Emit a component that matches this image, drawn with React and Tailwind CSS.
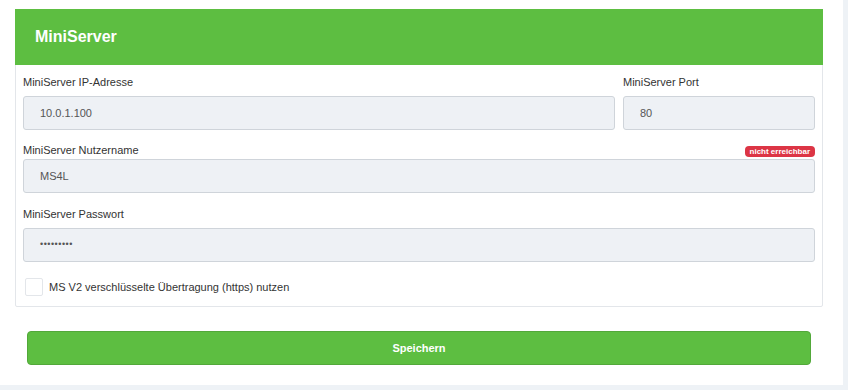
import React from 'react';

function Field({ label, value, badge, className = '' }) {
  return (
    <div className={`flex flex-col ${className}`}>
      <div className="flex items-end justify-between">
        <span className={`text-[11px] leading-none text-[#333] ${badge ? 'pb-[3px]' : 'pb-[8px]'}`}>{label}</span>
        {badge && (
          <span className="bg-[#dc3545] text-white text-[8px] font-bold leading-[11px] h-[11px] px-[5px] rounded-[4px] mb-[2px]">
            {badge}
          </span>
        )}
      </div>
      <div className="h-[34px] bg-[#eef1f5] border border-[#cfd4da] rounded-[3px] flex items-center px-4 text-[11px] text-[#555]">
        {value}
      </div>
    </div>
  );
}

export default function App() {
  return (
    <div className="w-[848px] h-[390px] bg-[#eef2f6] font-['Liberation_Sans',Arial,sans-serif]">
      <div className="w-[843px] h-[385px] bg-white pt-[9px] pl-[15px] pr-[20px]">
        <div className="border border-[#e3e6ea] rounded-[2px] h-[298px]">
          <div className="bg-[#5dbe41] h-[56px] mx-[-1px] mt-[-1px] flex items-center pl-[20px]">
            <h1 className="text-white text-[16px] font-bold">MiniServer</h1>
          </div>
          <div className="px-[7px] pt-[12px]">
            <div className="flex gap-[8px]">
              <Field label="MiniServer IP-Adresse" value="10.0.1.100" className="flex-1" />
              <Field label="MiniServer Port" value="80" className="w-[192px]" />
            </div>
            <Field className="mt-[15px]" label="MiniServer Nutzername" value="MS4L" badge="nicht erreichbar" />
            <Field className="mt-[16px]" label="MiniServer Passwort" value={<span className="text-[9px] tracking-[0.5px]">•••••••••</span>} />
            <label className="flex items-center mt-[16px] ml-[2px] gap-[6px]">
              <span className="w-[18px] h-[18px] border border-[#e3e6ea] rounded-[2px] bg-white"></span>
              <span className="text-[11px] text-[#333]">MS V2 verschlüsselte Übertragung (https) nutzen</span>
            </label>
          </div>
        </div>
        <div className="px-[12px] mt-[24px]">
          <button className="w-full h-[34px] bg-[#5dbe41] border border-[#52a83a] rounded-[4px] text-white text-[11px] font-bold">
            Speichern
          </button>
        </div>
      </div>
    </div>
  );
}
